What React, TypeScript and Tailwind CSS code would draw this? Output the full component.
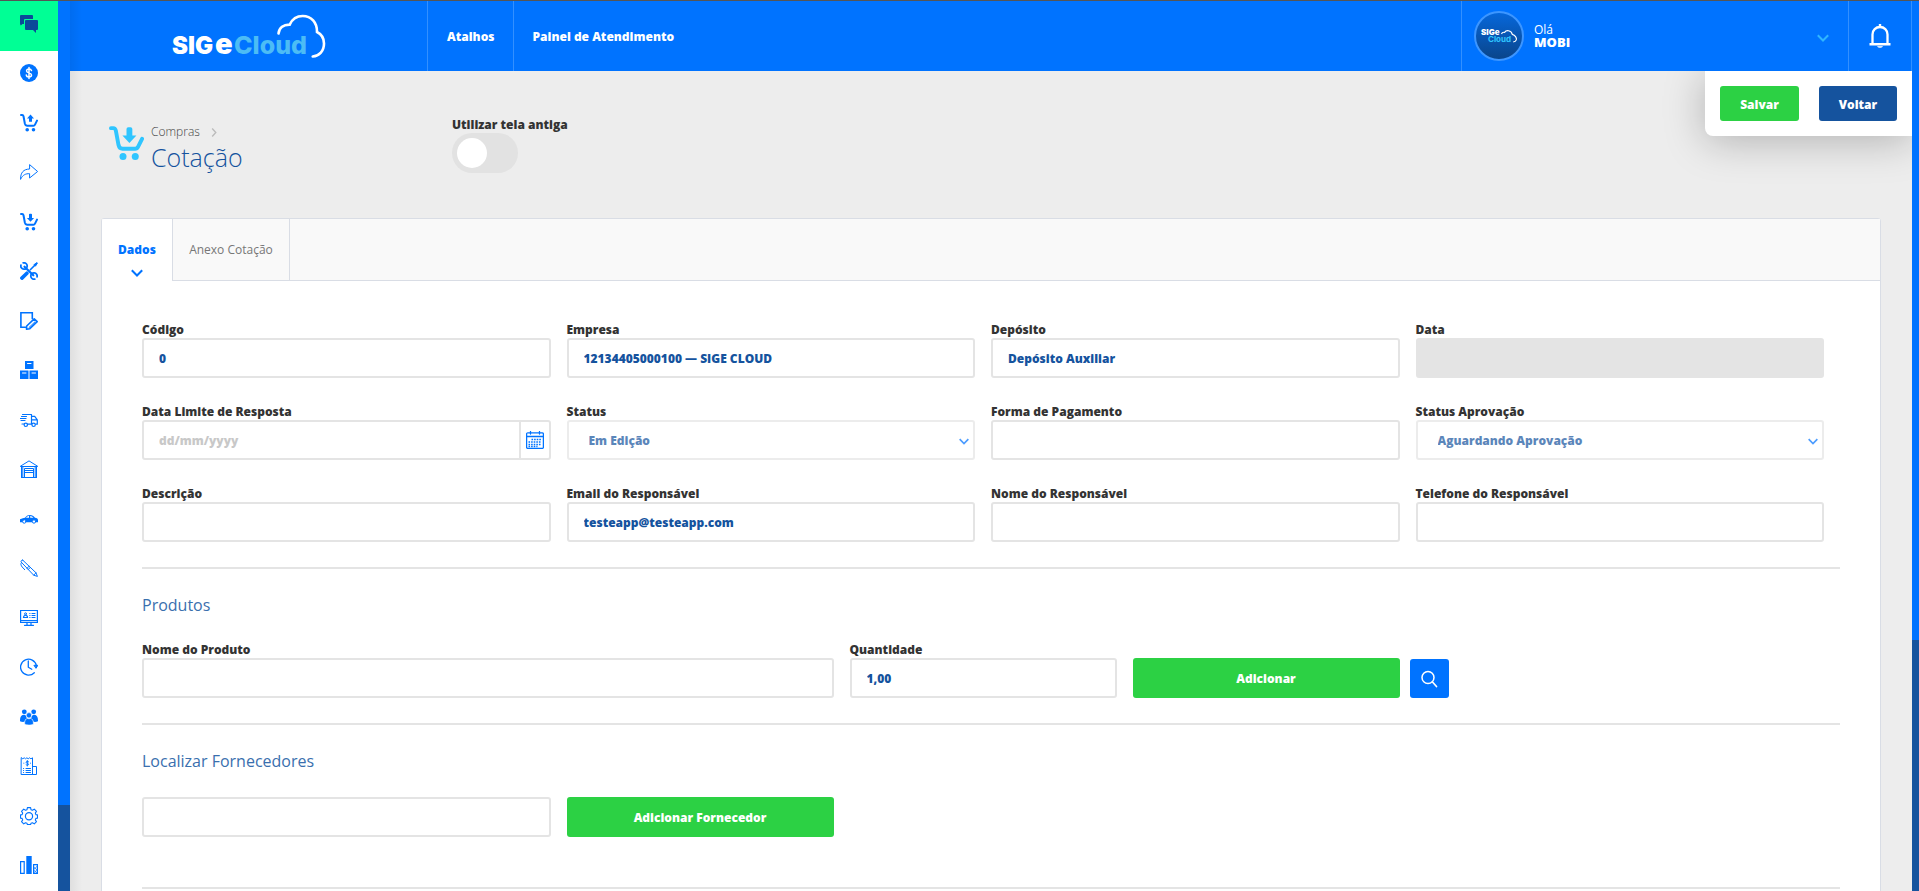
import type { ReactNode } from 'react';

const INPUT =
  'h-10 w-full rounded-[3px] border-2 border-[#e4e4e4] bg-white px-[15px] pt-px text-[12px] font-extrabold text-[#15539e] outline-none disabled:bg-[#e4e4e4]';

function Icon({ children, className = 'h-[18px] w-[18px]' }: { children: ReactNode; className?: string }) {
  return (
    <svg
      viewBox="0 0 18 18"
      className={className}
      fill="none"
      stroke="currentColor"
      strokeLinecap="round"
      strokeLinejoin="round"
      aria-hidden="true"
    >
      {children}
    </svg>
  );
}

function Cart({ up, className }: { up?: boolean; className?: string }) {
  return (
    <Icon className={className}>
      <path d="M1 1.100h1.200c.9 0 1.100.4 1.300 1.200L4.900 9.800c.3 1.300.9 1.900 2.100 1.900h6.400c.8 0 1.200-.3 1.600-1.100l2-4" strokeWidth="2" />
      <circle cx="7.200" cy="15.700" r="1.800" fill="currentColor" stroke="none" />
      <circle cx="13.500" cy="15.700" r="1.800" fill="currentColor" stroke="none" />
      {up ? (
        <path d="M10.500.6l3.500 3.800h-2v3.400H9V4.400H7z" fill="currentColor" stroke="none" />
      ) : (
        <path d="M10.500 8.700L6.900 4.900H9V1.600A.9.900 0 019.900.7h1.200a.9.900 0 01.9.9v3.300h2.100z" fill="currentColor" stroke="none" />
      )}
    </Icon>
  );
}

function ChevronDown({ className }: { className: string }) {
  return (
    <svg viewBox="0 0 12 8" className={className} fill="none" stroke="currentColor" strokeWidth="2" aria-hidden="true">
      <path d="M.8 1.200L6 6.500l5.200-5.300" />
    </svg>
  );
}

const CLOUD = 'M106.500 20.500c.6-5.800 5-9 11.200-8.900C120.200 6.200 125 3 130.700 3c8.500 0 14.500 6.500 14.300 16 5 2.500 7 6.500 7 11.500 0 7.500-4.600 12.500-11.300 13';

const menu: { label: string; icon: ReactNode }[] = [
  {
    label: 'Financeiro',
    icon: (
      <Icon>
        <circle cx="9" cy="9" r="9" fill="currentColor" stroke="none" />
        <path d="M11.500 6.600C11.200 5.500 10.300 5 9 5c-1.500 0-2.400.7-2.400 1.900C6.600 9.500 11.500 8.200 11.500 11c0 1.300-1 2-2.500 2s-2.500-.7-2.700-1.900M9 3.500v11" stroke="#fff" strokeWidth="1.500" />
      </Icon>
    ),
  },
  { label: 'Vendas', icon: <Cart up /> },
  {
    label: 'Expedição',
    icon: (
      <Icon>
        <path d="M.6 16C.4 9.500 3.500 6.200 9.600 6V1.600l8 6.900-8 6.500v-4.300c-4-.2-6.500 1-9 5.300z" strokeLinejoin="miter" />
      </Icon>
    ),
  },
  { label: 'Compras', icon: <Cart /> },
  {
    label: 'Serviços',
    icon: (
      <Icon>
        <path d="M4.500 4.700l8.800 8.600" strokeWidth="2.200" />
        <path d="M3.200.9a3.200 3.200 0 11-2.300 2.300M14.800 17.100a3.200 3.200 0 112.300-2.300" strokeWidth="1.800" />
        <path d="M1.900 16.100l5-4.900" strokeWidth="3.600" />
        <path d="M10.300 7.700l5-5" strokeWidth="1.600" />
        <path d="M14.200 2.500L17 .6l.5.5-1.900 2.800z" fill="currentColor" />
      </Icon>
    ),
  },
  {
    label: 'Contratos',
    icon: (
      <Icon>
        <path d="M5.500 15.200H.9V.8h11.400v6" strokeWidth="1.600" strokeLinejoin="miter" />
        <path d="M6.500 17.200l.2-3.200 7.500-7.200 3 2.800-7.400 7.100z" strokeWidth="1.600" />
        <path d="M9 15.500l6-5.700" />
      </Icon>
    ),
  },
  {
    label: 'Estoque',
    icon: (
      <Icon>
        <g fill="currentColor" stroke="none">
          <path d="M5 0h8.500v8H5zM0 9.500h8.500V18H0zM9.500 9.500H18V18H9.500z" />
        </g>
        <path d="M7.500 2.500h3.500M2.500 12h3.500M12 12h3.500" stroke="#fff" />
      </Icon>
    ),
  },
  {
    label: 'Transporte',
    icon: (
      <Icon>
        <path d="M2.500 3.500h9v9.700H7.500M11.500 5.300h3.200l2.600 3.500v4.400h-1.500M11.500 8.800h5.500M1.500 5.500h5M.5 7.500h5.500M1 9.500h4M2 13h2M11.500 13.200h-1" strokeWidth="1.200" />
        <circle cx="5.800" cy="13.800" r="1.700" strokeWidth="1.200" />
        <circle cx="13.600" cy="13.800" r="1.700" strokeWidth="1.200" />
      </Icon>
    ),
  },
  {
    label: 'Depósito',
    icon: (
      <Icon>
        <path d="M.5 6.200L9 .9l8.500 5.300M.8 6.500h16.400M1.500 6.500v11M2.800 6.500v11M16.500 6.500v11M15.200 6.500v11M4.500 17.500v-9h9v9M4.500 10.500h9M4.500 12.500h9M1.500 17.500h15" />
      </Icon>
    ),
  },
  {
    label: 'Frota',
    icon: (
      <Icon>
        <path d="M0 12.300V9.200C2 8.300 3.800 8.200 5 7.700c1.500-1.900 3-2.600 5-2.600 2.300 0 3.500 1 5 2.600 2 .4 3 1.100 3 2.300v2.300z" fill="currentColor" stroke="none" />
        <path d="M6 7.700c1-1.200 1.800-1.500 3-1.600v1.600zM10.200 6.100c1.300.1 2.200.6 3.200 1.600h-3.200z" fill="#fff" stroke="none" />
        <circle cx="4.300" cy="11.500" r="1.700" fill="#fff" />
        <circle cx="14" cy="11.500" r="1.700" fill="#fff" />
      </Icon>
    ),
  },
  {
    label: 'Assinaturas',
    icon: (
      <Icon>
        <path d="M2.800 1.200L16 13.800l1.400 3.600-3.700-1.200L1.300 3.200c-.8-1 .5-2.600 1.500-2zM7 9.300l2.200-2.200M8.200 10.500l2.200-2.200M13.700 16.200L16 13.800M1.500 3.500C.3 5 1 6.500 2.200 8l2.500 2.700" />
      </Icon>
    ),
  },
  {
    label: 'PDV',
    icon: (
      <Icon>
        <path d="M.6 1.500h16.800v11.800H.6zM.6 11.500h16.800M7 13.300v2.400M11 13.300v2.400M4.500 16.300h9M3.500 8.500c0-3 4-3 4 0zM9.800 4.500h.2M12 4.500h3M9.800 6.500h.2M12 6.500h3M9.800 8.500h.2M12 8.500h3" strokeWidth="1.200" strokeLinejoin="miter" />
        <circle cx="5.500" cy="4.800" r="1" />
      </Icon>
    ),
  },
  {
    label: 'Agenda',
    icon: (
      <Icon>
        <path d="M14.300 14.800A8 8 0 1116.400 7.500" strokeWidth="1.300" />
        <path d="M14.300 7.300h3.500L16.200 10z" fill="currentColor" />
        <path d="M8.300 3v6.300l3.500 2" strokeWidth="1.300" />
      </Icon>
    ),
  },
  {
    label: 'Clientes',
    icon: (
      <Icon>
        <g fill="currentColor" stroke="none">
          <circle cx="4.300" cy="3.800" r="2.400" />
          <circle cx="13.700" cy="3.800" r="2.400" />
          <path d="M0 13.300c-.1-3.900.8-6.300 3.600-6.600 1 0 1.700.2 2.300.7.2 1.700.9 2.600 1.700 3.100-1.800.4-2.700 1.400-3 3.300-1.700.2-3.300.1-4.600-.5zM18 13.300c.1-3.900-.8-6.300-3.600-6.600-1 0-1.700.2-2.300.7-.2 1.700-.9 2.600-1.700 3.100 1.800.4 2.700 1.400 3 3.300 1.700.2 3.300.1 4.600-.5z" />
        </g>
        <circle cx="9" cy="7.300" r="2.700" fill="currentColor" stroke="#fff" strokeWidth=".6" />
        <path d="M4.600 16.200c-.1-3.600.9-5.600 3.100-5.800.8.5 1.800.5 2.600 0 2.200.2 3.200 2.200 3.100 5.800-2.300 1.100-6.500 1.100-8.800 0z" fill="currentColor" stroke="#fff" strokeWidth=".5" />
      </Icon>
    ),
  },
  {
    label: 'Fiscal',
    icon: (
      <Icon>
        <path d="M1.500.8l1.300 1 1.400-1 1.300 1 1.400-1 1.300 1 1.400-1 1.300 1 1.600-1v16.700h-11zM12.500 9.500h4v8h-4M3.500 11.500h.2M6 11.500h4.500M3.500 13.500h.2M6 13.500h4.500M3.500 15.500h.2M6 15.500h4.500" strokeLinejoin="miter" />
        <path d="M8.600 4.800c-.8-.8-2.600-.5-2.500.6.100 1 2.500.8 2.500 1.900 0 1-1.900 1.200-2.600.4M7.300 3.500v5.500M3.800 6.200h.1M10.500 6.200h.1" />
      </Icon>
    ),
  },
  {
    label: 'Configurações',
    icon: (
      <Icon>
        <path d="M7.400.6h3.200l.4 2.100 1.500.6 1.800-1.200 2.200 2.200-1.200 1.800.6 1.500 1.600.3v3.200l-1.600.3-.6 1.500 1.200 1.800-2.200 2.200-1.800-1.200-1.500.6-.4 1.200H7.400L7 16.300l-1.500-.6-1.800 1.200-2.200-2.200 1.200-1.800-.6-1.500L.5 11.100V7.900l1.600-.3.600-1.500-1.200-1.800 2.200-2.200 1.800 1.200L7 2.700z" strokeWidth="1.100" />
        <circle cx="9" cy="9.300" r="3.600" strokeWidth="1.200" />
      </Icon>
    ),
  },
  {
    label: 'Relatórios',
    icon: (
      <Icon>
        <path d="M.6 5.600h3.600v11.800H.6z" strokeWidth="1.200" strokeLinejoin="miter" />
        <path d="M6.300 0h5.400v18H6.300z" fill="currentColor" stroke="none" />
        <path d="M13.600 8.600h3.800v8.800h-3.800z" strokeWidth="1.200" strokeLinejoin="miter" />
        <path d="M13.600 11l3.800 3.200M13.600 14l3.800 3.200M17.400 10l-3.800 3.600M17.400 13.500l-3.800 3.500" strokeWidth=".7" />
      </Icon>
    ),
  },
];

function Field({ id, label, span = 'col-span-3', children }: { id: string; label: string; span?: string; children: ReactNode }) {
  return (
    <div className={`${span} pr-4`}>
      <label htmlFor={id} className="block pt-0.5 text-[12px] leading-4 font-extrabold text-[#333]">
        {label}
      </label>
      {children}
    </div>
  );
}

function Select({ id, option }: { id: string; option: string }) {
  return (
    <div className="relative opacity-70">
      <select id={id} className="h-10 w-full appearance-none rounded-[3px] border-2 border-[#e4e4e4] bg-white px-5 pt-px text-[12px] font-extrabold text-[#15539e] outline-none">
        <option>{option}</option>
      </select>
      <ChevronDown className="pointer-events-none absolute top-[18px] right-[6px] h-[7px] w-[10px] text-[#0073ff]" />
    </div>
  );
}

function Sidebar() {
  return (
    <aside className="flex h-full shrink-0">
      <div className="flex w-[58px] flex-col bg-white text-[#0073ff]">
        <button type="button" aria-label="Chat" className="flex h-[50px] w-full shrink-0 justify-center bg-[#00ff95] pt-[14px] text-[#0b4a99]">
          <Icon>
            <path d="M1 0h11a1 1 0 011 1v3H5a1 1 0 00-1 1v4H2.500L.8 10.500 0 9V1a1 1 0 011-1z" fill="currentColor" stroke="none" />
            <path d="M6 5h11a1 1 0 011 1v8a1 1 0 01-1 1h-1v3l-3-3H6a1 1 0 01-1-1V6a1 1 0 011-1z" fill="currentColor" stroke="none" />
          </Icon>
        </button>
        <nav className="flex flex-1 flex-col items-center justify-between pt-[13px] pb-[17px]">
          {menu.map((m) => (
            <a key={m.label} href="#" aria-label={m.label}>
              {m.icon}
            </a>
          ))}
        </nav>
      </div>
      <div className="flex w-3 flex-col justify-end bg-[#0073ff]">
        <div className="h-[86px] bg-[#15539e]" />
      </div>
    </aside>
  );
}

function Header() {
  return (
    <header className="flex h-[70px] shrink-0 bg-[#0073ff] text-[12px] text-white">
      <div className="w-[357px] pt-3 pl-[102px]">
        <svg viewBox="0 0 156 48" className="h-12 w-[156px]" role="img" aria-label="SIGE Cloud">
          <g fontFamily="'Inter', sans-serif" fontWeight="900" fontSize="24">
            <text x="0" y="41" fill="#fff">SIG</text>
            <text x="43" y="41" fill="#fff" fontSize="29">e</text>
            <text x="62" y="41" fill="#4cbcf5" fontWeight="800" fontSize="25">Cloud</text>
          </g>
          <path d={CLOUD} fill="none" stroke="#fff" strokeWidth="2.600" strokeLinecap="round" />
        </svg>
      </div>
      <nav className="flex font-extrabold">
        <a href="#" className="flex items-center border-l border-[#3390ff] px-[19px] pt-0.5">
          Atalhos
        </a>
        <a href="#" className="flex items-center border-l border-[#3390ff] px-[18px] pt-0.5">
          Painel de Atendimento
        </a>
      </nav>
      <button type="button" className="ml-auto flex w-[387px] items-center border-l border-[#3390ff] pr-[19px] pl-[12px] text-left">
        <svg viewBox="0 0 50 50" className="h-[50px] w-[50px]" aria-hidden="true">
          <defs>
            <linearGradient id="avatar" x1="0" y1="0" x2="0" y2="1">
              <stop offset="0" stopColor="#0668dd" />
              <stop offset="1" stopColor="#0a4488" />
            </linearGradient>
          </defs>
          <circle cx="25" cy="25" r="24" fill="url(#avatar)" stroke="#3d96ff" strokeWidth="2" />
          <g fontFamily="'Inter', sans-serif" fontWeight="900" fontSize="8">
            <text x="7" y="24" fill="#fff">SIGe</text>
            <text x="14" y="31" fill="#2fc5ff" fontWeight="700">Cloud</text>
          </g>
          <path d="M27.500 23c.5-1.500 2-1.900 3.200-1.700 1.200-2.300 6.500-2.500 7.600 2 2.700.8 4.700 3.300 4 5.600-.5 1.300-1.800 2-3 2" fill="none" stroke="#fff" strokeWidth="1.200" />
        </svg>
        <span className="flex flex-1 flex-col pl-[10px] text-[13px] leading-[13px]">
          <span className="text-[12px]">Olá</span>
          <b className="font-extrabold">MOBI</b>
        </span>
        <ChevronDown className="mt-1 h-2 w-3 text-[#2fb6ff]" />
      </button>
      <button type="button" aria-label="Notificações" className="flex w-16 items-center justify-center border-x border-[#3390ff]">
        <svg viewBox="0 0 22 24" className="h-6 w-[22px]" aria-hidden="true">
          <path d="M3.500 20V10.500C3.500 6 6.800 3 11 3s7.500 3 7.500 7.500V20" fill="none" stroke="#fff" strokeWidth="2.300" />
          <path d="M.5 20.200h21M11 0v3" stroke="#fff" strokeWidth="2.400" strokeLinejoin="round" />
          <path d="M8 22h6c-.5 1.300-1.500 2-3 2s-2.500-.7-3-2z" fill="#cfe4ff" />
        </svg>
      </button>
    </header>
  );
}

export default function App() {
  return (
    <div className="flex h-screen flex-col overflow-hidden bg-[#ededed] font-['Open_Sans',sans-serif] text-[12px]">
      <div className="h-px shrink-0 bg-[#555]" />
      <div className="flex min-h-0 flex-1">
        <Sidebar />

        <div className="relative flex min-w-0 flex-1 flex-col">
          <div className="pointer-events-none absolute inset-y-0 left-0 w-3 bg-linear-to-r from-black/6 to-transparent" />
          <Header />

          <div className="absolute top-[70px] right-0 flex gap-5 rounded-bl-lg bg-white p-[15px] shadow-[0_5px_40px_rgba(0,0,0,0.25)] [clip-path:inset(0_0_-60px_-60px)]">
            <button type="button" className="h-[35px] w-[79px] rounded-[3px] bg-[#2cd144] pt-0.5 font-extrabold text-white">
              Salvar
            </button>
            <button type="button" className="h-[35px] w-[78px] rounded-[3px] bg-[#15539e] pt-0.5 font-extrabold text-white">
              Voltar
            </button>
          </div>

          <main className="min-h-0 flex-1 overflow-hidden px-[31px]">
            <div className="flex h-[147px] pt-11 pl-[8px]">
              <Cart className="mt-[11px] h-[35px] w-[35px] shrink-0 text-[#2fc5ff]" />
              <div className="w-[308px] pt-2 pl-[7px]">
                <a href="#" className="flex items-center gap-[11px] leading-[18px] font-light text-[#444]">
                  Compras
                  <svg viewBox="0 0 6 10" className="h-[9px] w-[6px] text-[#bbb]" fill="none" stroke="currentColor" strokeWidth="1.500" aria-hidden="true">
                    <path d="M1 .5L5 5 1 9.500" />
                  </svg>
                </a>
                <h1 className="text-[25px] leading-8 font-light text-[#15539e]">Cotação</h1>
              </div>
              <label className="block pt-0.5 leading-4 font-extrabold text-[#333]">
                Utilizar tela antiga
                <input type="checkbox" className="peer sr-only" />
                <span className="block h-10 w-[66px] rounded-[20px] bg-[#e2e2e2] p-[5px] peer-checked:bg-[#2cd144]">
                  <span className="block h-[30px] w-[30px] rounded-full bg-white" />
                </span>
              </label>
            </div>

            <div className="rounded-t-[3px] border border-[#d9dde5] bg-white">
              <div className="flex h-[62px] bg-[#f9f9f9]" role="tablist">
                <button type="button" role="tab" aria-selected="true" className="flex w-[71px] flex-col items-center rounded-tl-[3px] border-r border-[#d9dde5] bg-white pt-[22px] leading-[18px] font-extrabold text-[#0073ff]">
                  Dados
                  <ChevronDown className="mt-[10px] h-2 w-3" />
                </button>
                <button type="button" role="tab" aria-selected="false" className="flex w-[117px] justify-center border-r border-b border-[#d9dde5] pt-[22px] leading-[18px] text-[#777]">
                  Anexo Cotação
                </button>
                <div className="flex-1 border-b border-[#d9dde5]" />
              </div>

              <form className="px-10 pt-[39px]" onSubmit={(e) => e.preventDefault()}>
                <div className="grid grid-cols-12 gap-y-6 border-b-2 border-[#e4e4e4] pb-[25px]">
                  <Field id="codigo" label="Código">
                    <input id="codigo" className={INPUT} defaultValue="0" />
                  </Field>
                  <Field id="empresa" label="Empresa">
                    <input id="empresa" className={INPUT} defaultValue="12134405000100 — SIGE CLOUD" />
                  </Field>
                  <Field id="deposito" label="Depósito">
                    <input id="deposito" className={INPUT} defaultValue="Depósito Auxiliar" />
                  </Field>
                  <Field id="data" label="Data">
                    <input id="data" className={INPUT} disabled />
                  </Field>
                  <Field id="limite" label="Data Limite de Resposta">
                    <div className="flex h-10 rounded-[3px] border-2 border-[#e4e4e4]">
                      <input id="limite" placeholder="dd/mm/yyyy" className="min-w-0 flex-1 px-[15px] pt-px font-extrabold text-[#15539e] outline-none placeholder:text-[#c8c8c8]" />
                      <button type="button" aria-label="Abrir calendário" className="flex w-[30px] items-center justify-center border-l-2 border-[#e4e4e4] text-[#0073ff]">
                        <Icon>
                          <path d="M1.800 1.800h14.400a1.200 1.200 0 011.200 1.200v13.200a1.200 1.200 0 01-1.200 1.200H1.800a1.200 1.200 0 01-1.200-1.200V3a1.200 1.200 0 011.200-1.200z" strokeWidth="1.300" />
                          <path d="M.6 5.500h16.800M4.500.5V3M13.500.5V3" strokeWidth="1.300" />
                          <path d="M5.500 8.500h10M2.500 11h13M2.500 13.500h13M2.500 15.500h9" strokeWidth="1.500" strokeDasharray="1.600 1" strokeLinecap="butt" />
                        </Icon>
                      </button>
                    </div>
                  </Field>
                  <Field id="status" label="Status">
                    <Select id="status" option="Em Edição" />
                  </Field>
                  <Field id="pagamento" label="Forma de Pagamento">
                    <input id="pagamento" className={INPUT} />
                  </Field>
                  <Field id="aprovacao" label="Status Aprovação">
                    <Select id="aprovacao" option="Aguardando Aprovação" />
                  </Field>
                  <Field id="descricao" label="Descrição">
                    <input id="descricao" className={INPUT} />
                  </Field>
                  <Field id="email" label="Email do Responsável">
                    <input id="email" className={INPUT} defaultValue="testeapp@testeapp.com" />
                  </Field>
                  <Field id="nome" label="Nome do Responsável">
                    <input id="nome" className={INPUT} />
                  </Field>
                  <Field id="telefone" label="Telefone do Responsável">
                    <input id="telefone" className={INPUT} />
                  </Field>
                </div>

                <section className="border-b-2 border-[#e4e4e4] pt-6 pb-[25px]">
                  <h2 className="pb-[23px] text-[16px] leading-6 text-[#3a6fae]">Produtos</h2>
                  <div className="grid grid-cols-12 items-end">
                    <Field id="produto" label="Nome do Produto" span="col-span-5">
                      <input id="produto" className={INPUT} />
                    </Field>
                    <Field id="quantidade" label="Quantidade" span="col-span-2">
                      <input id="quantidade" className={INPUT} defaultValue="1,00" />
                    </Field>
                    <div className="col-span-2 pr-4">
                      <button type="button" className="h-10 w-full rounded-[3px] bg-[#2cd144] pt-0.5 font-extrabold text-white">
                        Adicionar
                      </button>
                    </div>
                    <button type="button" aria-label="Pesquisar" className="-ml-[6px] flex h-[39px] w-[39px] items-center justify-center rounded-[3px] bg-[#0073ff] text-white">
                      <Icon>
                        <circle cx="8" cy="7.500" r="6" strokeWidth="1.500" />
                        <path d="M12.500 12l4 4.500" strokeWidth="1.700" />
                      </Icon>
                    </button>
                  </div>
                </section>

                <section className="border-b-2 border-[#e4e4e4] pt-6 pb-[50px]">
                  <h2 className="pb-6 text-[16px] leading-6 text-[#3a6fae]">Localizar Fornecedores</h2>
                  <div className="grid grid-cols-12">
                    <div className="col-span-3 pr-4">
                      <input aria-label="Localizar Fornecedores" className={INPUT} />
                    </div>
                    <div className="col-span-2 pr-4">
                      <button type="button" className="h-10 w-full rounded-[3px] bg-[#2cd144] pt-0.5 font-extrabold text-white">
                        Adicionar Fornecedor
                      </button>
                    </div>
                  </div>
                </section>
                <div className="h-40" />
              </form>
            </div>
          </main>
        </div>

        <div className="flex w-[7px] shrink-0 flex-col justify-end bg-[#0073ff]">
          <div className="h-[251px] bg-[#15539e]" />
        </div>
      </div>
    </div>
  );
}
